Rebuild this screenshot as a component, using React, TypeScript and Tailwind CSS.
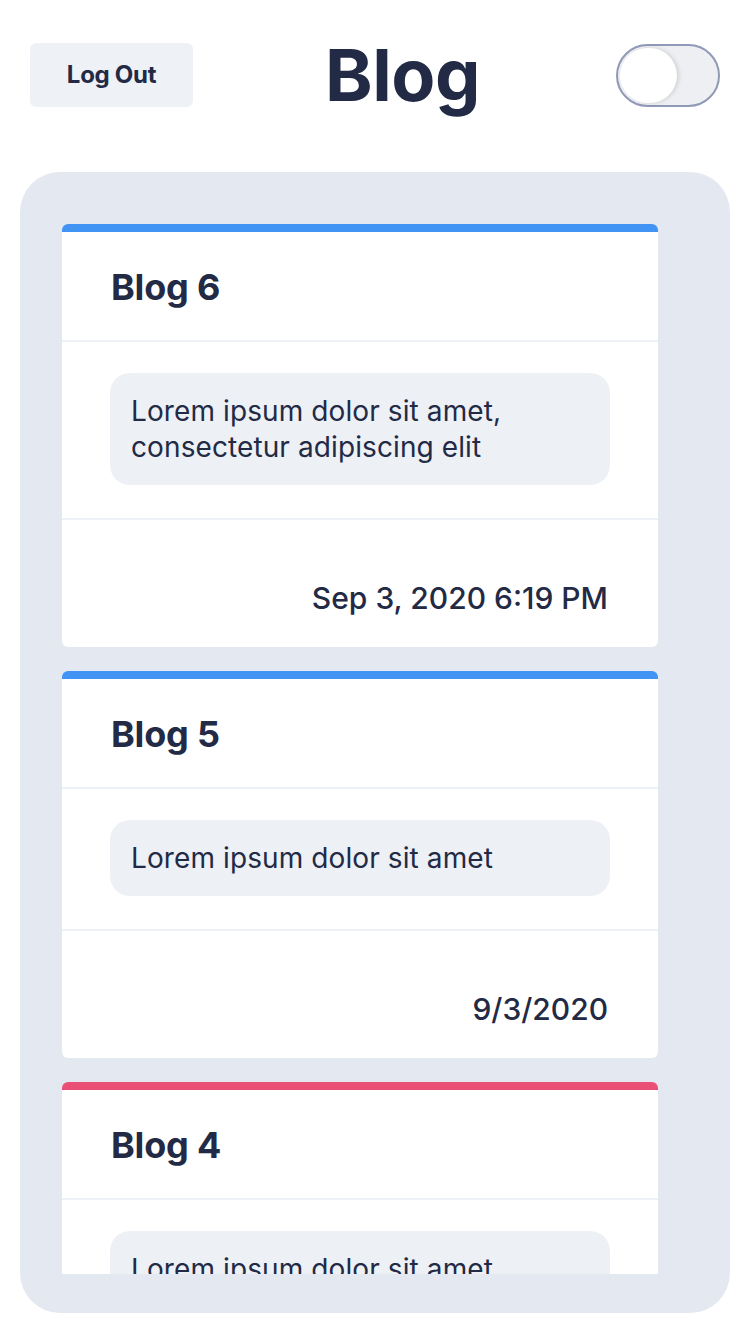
const posts = [
  {
    title: "Blog 6",
    body: "Lorem ipsum dolor sit amet, consectetur adipiscing elit",
    date: "Sep 3, 2020 6:19 PM",
    bar: "bg-[#4294f4]",
  },
  {
    title: "Blog 5",
    body: "Lorem ipsum dolor sit amet",
    date: "9/3/2020",
    bar: "bg-[#4294f4]",
  },
  {
    title: "Blog 4",
    body: "Lorem ipsum dolor sit amet",
    date: "9/3/2020",
    bar: "bg-[#ea4f75]",
  },
]

function PostCard({ post }: { post: (typeof posts)[number] }) {
  return (
    <div className="shrink-0 bg-white rounded-[6px] overflow-hidden">
      <div className={`h-2 ${post.bar}`} />
      <div className="px-[49px] pt-[35px] pb-[33px] border-b-2 border-[#eef1f5]">
        <h2 className="text-[36px] leading-[40px] font-bold tracking-[-0.2px]">{post.title}</h2>
      </div>
      <div className="px-[48px] pt-[31px] pb-[33px] border-b-2 border-[#eef1f5]">
        <p className="bg-[#edf0f5] rounded-[20px] px-[21px] py-5 text-[28px] leading-[36px] tracking-[0.1px]">
          {post.body}
        </p>
      </div>
      <div className="px-[50px] pt-[60px] pb-[31px] text-right text-[30px] leading-[36px] font-medium">
        {post.date}
      </div>
    </div>
  )
}

export default function App() {
  return (
    <main
      className="w-[750px] h-[1334px] bg-white text-[#222a45] overflow-hidden"
      style={{ fontFamily: "Inter, 'Noto Sans', sans-serif" }}
    >
      {/* шапка */}
      <header className="flex items-center justify-between px-[30px] pt-[43px]">
        <button className="w-[163px] h-[64px] rounded-[6px] bg-[#eef1f6] text-[24px] font-bold tracking-[-0.3px]">
          Log Out
        </button>
        <h1 className="text-[72px] leading-[64px] font-bold tracking-[-0.5px] pr-[4px]">Blog</h1>
        <div className="w-[104px] h-[63px] rounded-full border-2 border-[#9099b5] bg-[#eeeff3] p-[2px]">
          <div className="w-[57px] h-full rounded-full bg-white shadow-[2px_0_4px_rgba(0,0,0,0.12)]" />
        </div>
      </header>

      <section className="mx-[20px] mt-[65px] rounded-[40px] bg-[#e4e8f1] pl-[42px] pr-[72px] pt-[52px] pb-[39px]">
        <div className="h-[1050px] overflow-hidden flex flex-col gap-6">
          {posts.map((p) => (
            <PostCard key={p.title} post={p} />
          ))}
        </div>
      </section>
    </main>
  )
}
